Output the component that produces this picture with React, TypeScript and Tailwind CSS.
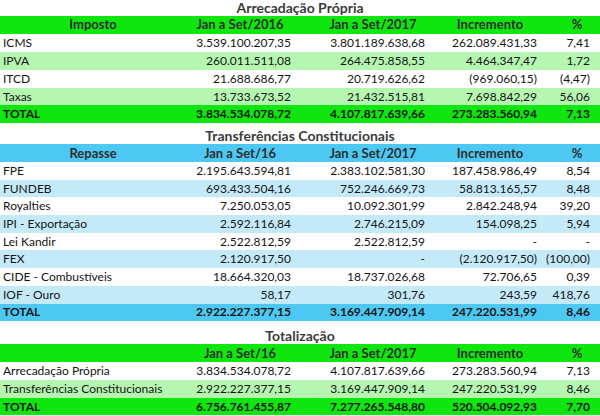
import React from "react";
import cl from "clsx";

type Row = string[];

const arrecadacao: Row[] = [
  ["ICMS", "3.539.100.207,35", "3.801.189.638,68", "262.089.431,33", "7,41"],
  ["IPVA", "260.011.511,08", "264.475.858,55", "4.464.347,47", "1,72"],
  ["ITCD", "21.688.686,77", "20.719.626,62", "(969.060,15)", "(4,47)"],
  ["Taxas", "13.733.673,52", "21.432.515,81", "7.698.842,29", "56,06"],
];

const transferencias: Row[] = [
  ["FPE", "2.195.643.594,81", "2.383.102.581,30", "187.458.986,49", "8,54"],
  ["FUNDEB", "693.433.504,16", "752.246.669,73", "58.813.165,57", "8,48"],
  ["Royalties", "7.250.053,05", "10.092.301,99", "2.842.248,94", "39,20"],
  ["IPI - Exportação", "2.592.116,84", "2.746.215,09", "154.098,25", "5,94"],
  ["Lei Kandir", "2.522.812,59", "2.522.812,59", "-", "-"],
  ["FEX", "2.120.917,50", "-", "(2.120.917,50)", "(100,00)"],
  ["CIDE - Combustíveis", "18.664.320,03", "18.737.026,68", "72.706,65", "0,39"],
  ["IOF - Ouro", "58,17", "301,76", "243,59", "418,76"],
];

const totalizacao: Row[] = [
  ["Arrecadação Própria", "3.834.534.078,72", "4.107.817.639,66", "273.283.560,94", "7,13"],
  ["Transferências Constitucionais", "2.922.227.377,15", "3.169.447.909,14", "247.220.531,99", "8,46"],
];

const grid = "grid grid-cols-[186px_108px_140px_112px_54px]";
const numPad = ["pl-[3px] text-left", "pr-[3px] text-right", "pr-[9px] text-right", "pr-[9px] text-right", "pr-[10px] text-right"];
const headPad = ["text-center", "text-center", "pl-[18px] text-center", "text-center", "pl-[8px] text-center"];

function Section({
  title,
  titleH,
  head,
  rows,
  total,
  rowH,
  strong,
  soft,
}: {
  title: string;
  titleH: string;
  head: string[];
  rows: Row[];
  total: Row;
  rowH: string;
  strong: string;
  soft: string;
}) {
  return (
    <div>
      <div className={cl("flex items-end justify-center pb-[1px] text-[14px] font-bold text-[#3b3b3b]", titleH)}>
        {title}
      </div>
      <div className={cl(grid, "items-center text-[13px] font-bold text-[#2e2e2e]", strong, rowH)}>
        {head.map((h, i) => (
          <div key={i} className={headPad[i]}>
            {h}
          </div>
        ))}
      </div>
      {rows.map((r, ri) => (
        <div key={ri} className={cl(grid, "items-center text-[#141414]", rowH, ri % 2 === 1 ? soft : "bg-white")}>
          {r.map((c, i) => (
            <div key={i} className={cl(numPad[i], "whitespace-nowrap")}>
              {c}
            </div>
          ))}
        </div>
      ))}
      <div className={cl(grid, "items-center font-bold text-[#141414]", rowH, strong)}>
        {total.map((c, i) => (
          <div key={i} className={numPad[i]}>
            {c}
          </div>
        ))}
      </div>
    </div>
  );
}

export default function App() {
  return (
    <div className="w-[600px] h-[416px] overflow-hidden bg-white text-[12px] leading-none" style={{ fontFamily: "Lato, 'Open Sans', sans-serif" }}>
      <Section
        title="Arrecadação Própria"
        titleH="h-[16px]"
        head={["Imposto", "Jan a Set/2016", "Jan a Set/2017", "Incremento", "%"]}
        rows={arrecadacao}
        total={["TOTAL", "3.834.534.078,72", "4.107.817.639,66", "273.283.560,94", "7,13"]}
        rowH="h-[17.9px]"
        strong="bg-[#0ee60e]"
        soft="bg-[#b5f7b0]"
      />
      <Section
        title="Transferências Constitucionais"
        titleH="h-[21px]"
        head={["Repasse", "Jan a Set/16", "Jan a Set/2017", "Incremento", "%"]}
        rows={transferencias}
        total={["TOTAL", "2.922.227.377,15", "3.169.447.909,14", "247.220.531,99", "8,46"]}
        rowH="h-[17.7px]"
        strong="bg-[#4cc8f2]"
        soft="bg-[#c4eafa]"
      />
      <Section
        title="Totalização"
        titleH="h-[23px]"
        head={["", "Jan a Set/16", "Jan a Set/2017", "Incremento", "%"]}
        rows={totalizacao}
        total={["TOTAL", "6.756.761.455,87", "7.277.265.548,80", "520.504.092,93", "7,70"]}
        rowH="h-[17.8px]"
        strong="bg-[#0ee60e]"
        soft="bg-[#b5f7b0]"
      />
    </div>
  );
}
